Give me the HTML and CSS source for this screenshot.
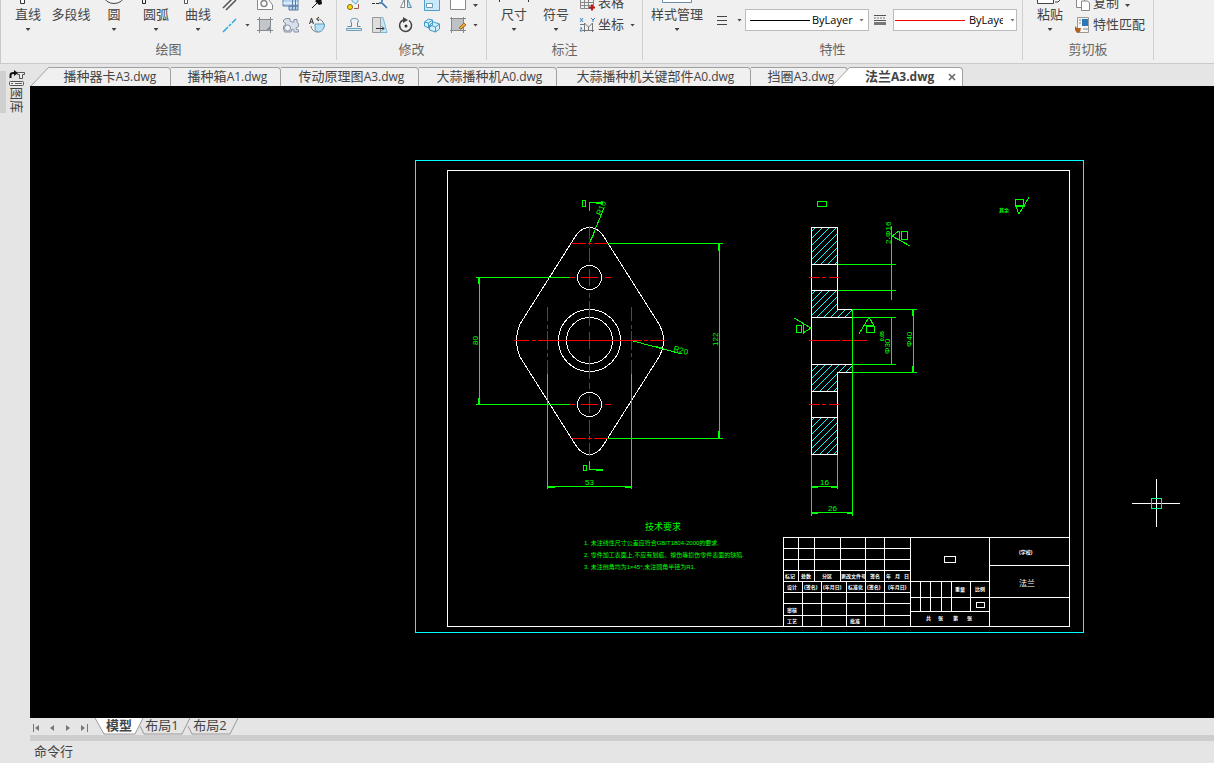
FILE: index.html
```html
<!DOCTYPE html>
<html lang="zh-CN">
<head>
<meta charset="utf-8">
<title>法兰A3.dwg</title>
<link rel="stylesheet" href="styles.css">
</head>
<body>
<header class="ribbon">
  <section class="group group-draw">
    <div class="tools">
      <button class="big w40"><svg class="stub" viewBox="0 0 24 5"><path d="M8.500 0v3.500h-4V0" fill="#fff" stroke="#333"/></svg><span>直线</span><i class="caret"></i></button>
      <button class="big w46"><svg class="stub" viewBox="0 0 24 5"></svg><span>多段线</span></button>
      <button class="big w40"><svg class="stub" viewBox="0 0 24 5"><path d="M2 -4a10 7.500 0 0 0 20 0" fill="#f5f5f5" stroke="#444"/></svg><span>圆</span><i class="caret"></i></button>
      <button class="big w44"><svg class="stub" viewBox="0 0 24 5"><path d="M1.500 0v3.500h-3V0" fill="#fff" stroke="#222"/></svg><span>圆弧</span><i class="caret"></i></button>
      <button class="big w40"><svg class="stub" viewBox="0 0 24 5"><path d="M1.500 0v3.500h-3V0" fill="#fff" stroke="#555"/></svg><span>曲线</span><i class="caret"></i></button>
      <div class="icons">
        <div class="line top">
          <button class="ico" aria-label="构造线"><svg viewBox="0 0 16 11"><path d="M1 8 10-1M4 10 14 0" fill="none" stroke="#555" stroke-width="1.500"/></svg></button><i class="blank"></i>
          <button class="ico" aria-label="面域"><svg viewBox="0 0 16 11"><path d="M.500-2v11.500h15V5l-5-7z" fill="#fff" stroke="#888"/><circle cx="7" cy="3.500" r="3" fill="none" stroke="#888" stroke-width="1.500"/></svg></button>
          <button class="ico" aria-label="表格"><svg viewBox="0 0 16 11"><path d="M0-2h15v8H0zM6 6h9v4H6z" fill="#b4d3f0" stroke="#5b7ba0"/><path d="M0 3h15" stroke="#fff"/><path d="M9.500-2v12M12.500-2v12" stroke="#5b7ba0"/></svg></button>
          <button class="ico" aria-label="射线"><svg viewBox="0 0 16 11"><path d="M3 8 11 0" stroke="#111"/><path d="m6 1 6-4 1 7-3 1z" fill="#111"/></svg></button>
        </div>
        <div class="line">
          <button class="ico" aria-label="中心线"><svg viewBox="0 0 16 16"><path d="m1 15 5-5m1-1 2-2m1-1 4-4" stroke="#29a9df" stroke-width="1.500"/></svg></button><i class="caret"></i>
          <button class="ico" aria-label="填充"><svg viewBox="0 0 16 16"><path d="M2 2h12v12H2z" fill="#c2c6ca"/><path d="M0 2.500h16M0 13.500h16M2.500 0v16M13.500 0v16" stroke="#888"/><path d="m8 14 6-6v6z" fill="#8d9297"/></svg></button>
          <button class="ico" aria-label="块"><svg viewBox="0 0 16 16"><path d="M3 1.500h4V4l2 1h2V2.500h3v3l1.500 1v3L13 11v1l2.500 1v2H11v-2l-2-1-1 3H1.500L.500 12V9L3 7 .500 5V3z" fill="#d9dfe9" stroke="#8492a5"/><circle cx="4.500" cy="11" r="3" fill="#f4f4f4" stroke="#8492a5"/></svg></button>
          <button class="ico" aria-label="轮廓"><svg viewBox="0 0 16 16"><path d="M8 2a6.500 6.500 0 1 1-6 7" fill="none" stroke="#777"/><path d="M6 7h9.500c0 5-3 8-6 8S6 12 6 10z" fill="#b5e0f6" stroke="#5f9bbb"/><path d="M.500 7 2.500 1l2 6M1 5h3M10 0 7.500 2 10 4" fill="none" stroke="#333"/></svg></button>
        </div>
      </div>
    </div>
    <h2>绘图</h2>
  </section>
  <section class="group group-modify">
    <div class="tools">
      <div class="icons">
        <div class="line top">
          <button class="ico" aria-label="复制对象"><svg viewBox="0 0 16 11"><path d="M6-3h6v4L10 4 6 1z" fill="#d5edfb" stroke="#5ca4cf"/><circle cx="4" cy="7" r="2.500" fill="#ffdc00" stroke="#7c6b16"/><path d="M8 8.500h4.500V4" fill="none" stroke="#a55"/></svg></button>
          <button class="ico" aria-label="修剪"><svg viewBox="0 0 16 11"><path d="M0 3.500h3m1 0h3" stroke="#333"/><path d="M7 3h3l5 5M10 2V-1" fill="none" stroke="#2f6fb2" stroke-width="1.500"/></svg></button>
          <button class="ico" aria-label="镜像"><svg viewBox="0 0 16 11"><path d="M6.500-1v8.500h-4z" fill="#fff" stroke="#888"/><path d="M9.500-1v8.500h4z" fill="#bde2f5" stroke="#5b8fad"/></svg></button>
          <button class="ico" aria-label="缩放"><svg viewBox="0 0 16 11"><path d="M.500-1v11.500h15V-1z" fill="#c9e9fa" stroke="#4ba0d0"/><path d="M2.500 3.500h6v4h-6z" fill="#fff" stroke="#6a9ab5"/></svg></button>
          <button class="ico" aria-label="打断"><svg viewBox="0 0 16 11"><path d="M.500-1v10.500h15V-1" fill="#fff" stroke="#888"/></svg></button>
          <i class="caret"></i>
        </div>
        <div class="line">
          <button class="ico" aria-label="偏移"><svg viewBox="0 0 16 16"><path d="M1.500 9.500h4V6c-2-3 0-4.500 3-4.500s5 1.500 3 4.500v3.500h3" fill="none" stroke="#5389ac"/><path d="M.500 11.500h15v2H.500z" fill="#d6eefa" stroke="#6f9db8"/></svg></button>
          <button class="ico" aria-label="拉伸"><svg viewBox="0 0 16 16"><path d="M8 .500h3l4 15H8z" fill="#c3e8f8" stroke="#7ab9d6"/><path d="M.500.500h8v15h-8z" fill="#ddd" stroke="#999"/><path d="M4 11.500h8m-2-2 2 2-2 2" fill="none" stroke="#333"/></svg></button>
          <button class="ico" aria-label="旋转"><svg viewBox="0 0 16 16"><path d="M11 3.500A6 6 0 1 1 5 3" fill="none" stroke="#444" stroke-width="1.500"/><path d="m5 0 5 3-5 3z" fill="#444"/><circle cx="8" cy="9" r="1.500" fill="#333"/></svg></button>
          <button class="ico" aria-label="阵列"><svg viewBox="0 0 16 16"><path d="m.500 5 4-3 4 1v5l-4 3-4-2zM5.500 8l4-3 6 2v5l-4 3-6-2z" fill="#d3effc" stroke="#3f9bc6"/><path d="m.500 5 4 1v5m0-5 4-3M6 8l5.500 2v5m0-5 4-3" fill="none" stroke="#3f9bc6"/></svg></button>
          <button class="ico" aria-label="编辑填充"><svg viewBox="0 0 16 16"><path d="M2 2h12v12H2z" fill="#bfc2c5"/><path d="M0 1.500h16M0 13.500h16M1.500 0v16M13.500 0v16" stroke="#888"/><path d="m9 11 5-5 2 2-5 4z" fill="#edaa2e" stroke="#a16b20"/></svg></button>
          <i class="caret"></i>
        </div>
      </div>
    </div>
    <h2>修改</h2>
  </section>
  <section class="group group-note">
    <div class="tools">
      <button class="big w42"><svg class="stub" viewBox="0 0 24 5"><path d="M-2.500 0v2M26.500 0v2" stroke="#333"/></svg><span>尺寸</span><i class="caret"></i></button>
      <button class="big w42"><svg class="stub" viewBox="0 0 24 5"></svg><span>符号</span><i class="caret"></i></button>
      <div class="icons named">
        <div class="line top"><button class="tool"><svg viewBox="0 0 16 11"><path d="M.500-1v9.500h13V-1M0 2.500h14M0 5.500h14M4.500-1v9M8.500-1v9" fill="none" stroke="#888"/><path d="M9 7.500h6m-3-3v6" stroke="#b71c1c" stroke-width="2"/></svg><span>表格</span></button></div>
        <div class="line"><button class="tool"><svg viewBox="0 0 16 16"><path d="M4.500 15V6M2 13.500h12M4.500 6l4 4 4-4v9M8.500 10v3M0 7.500h4" fill="none" stroke="#777"/><path d="m0 1 3 4m0-4L0 5m11-4 2 2 2-2m-2 2v2M0 11h2l-2 3h2" stroke="#3981be" fill="none"/></svg><span>坐标</span><i class="caret"></i></button></div>
      </div>
    </div>
    <h2>标注</h2>
  </section>
  <section class="group group-props">
    <div class="tools">
      <button class="big w68"><svg class="stub wide" viewBox="0 0 30 5"><path d="M.500 0v2.500h29V0" fill="#fff" stroke="#6b8da8"/></svg><span>样式管理</span><i class="caret"></i></button>
      <button class="pick" aria-label="线宽"><svg viewBox="0 0 10 12"><path d="M0 2.500h10" stroke="#444"/><path d="M0 6.500h10" stroke="#444"/><path d="M0 10.500h10" stroke="#444" stroke-width="1"/></svg><i class="caret"></i></button>
      <label class="combo"><i class="stroke"></i><select aria-label="线型"><option>ByLayer</option></select><i class="caret grey"></i></label>
      <svg class="dash" viewBox="0 0 12 12"><path d="M0 1.500h12M0 6.500h12" stroke="#555"/><path d="M0 4h12" stroke="#777" stroke-dasharray="2 1"/><path d="M0 9.500h12" stroke="#777" stroke-width="3"/></svg>
      <label class="combo red"><i class="stroke"></i><select aria-label="线色"><option>ByLayer</option></select><i class="caret grey"></i></label>
    </div>
    <h2>特性</h2>
  </section>
  <section class="group group-clip">
    <div class="tools">
      <button class="big w46"><svg class="stub wide" viewBox="0 0 30 5"><path d="M2.500 0v3.500h16V0M20 2h3l2-2" fill="#fff" stroke="#444"/></svg><span>粘贴</span><i class="caret"></i></button>
      <div class="icons named">
        <div class="line top"><button class="tool"><svg viewBox="0 0 16 11"><path d="M1.500-1v8.500h8V-1" fill="#fff" stroke="#888"/><path d="M6.500 1v9.500h8V3l-2-2z" fill="#fff" stroke="#888"/></svg><span>复制</span><i class="caret"></i></button></div>
        <div class="line"><button class="tool"><svg viewBox="0 0 16 16"><path d="M2.500.500h11v15h-11z" fill="#f4f4f4" stroke="#999"/><path d="M7 2h6v7H7z" fill="#2e75b6"/><path d="M4 3h2M4 6h2M8 12h5" stroke="#888"/><path d="m0 9 2 2h4l-1 4-3 1-2-3z" fill="#b1601e"/></svg><span>特性匹配</span></button></div>
      </div>
    </div>
    <h2>剪切板</h2>
  </section>
</header>

<div class="workspace">
  <aside class="rail">
    <i class="grip"></i>
    <button class="library">
      <svg viewBox="0 0 16 16"><path d="M1.500 7V4q0-2 3-2H6" fill="none" stroke="#111" stroke-width="2"/><path d="m5-1 4 3-4 3z" fill="#111"/><path d="M8.500 1.500h7v2h-2v4h-3v-4h-2z" fill="#eee" stroke="#555"/><rect x=".500" y="10.500" width="14" height="4" rx="1" fill="#eee" stroke="#555"/><path d="M2 12.500h2m2 0h7" stroke="#666"/></svg>
      <span>图库</span>
    </button>
  </aside>
  <main class="document">
    <nav class="files">
      <svg class="slope" viewBox="0 0 20 19"><path d="M1 19 18.500.500H20V19z" fill="#f0f0f0"/><path d="M1 19 18.500.500H20" fill="none" stroke="#a0a0a0"/></svg>
      <button class="file first">播种器卡<span>A3.dwg</span></button>
      <button class="file f110">播种箱<span>A1.dwg</span></button>
      <button class="file f138">传动原理图<span>A3.dwg</span></button>
      <button class="file f138">大蒜播种机<span>A0.dwg</span></button>
      <button class="file f194">大蒜播种机关键部件<span>A0.dwg</span></button>
      <button class="file f98">挡圈<span>A3.dwg</span></button>
      <svg class="slope over" viewBox="0 0 20 19"><path d="M1 19 18.500.500H20V19z" fill="#fff"/><path d="M1 19 18.500.500H20" fill="none" stroke="#a0a0a0"/></svg>
      <div class="file active"><button class="name">法兰<span>A3.dwg</span></button><button class="close" aria-label="关闭"><svg viewBox="0 0 8 8"><path d="m1 1 6 6m0-6L1 7" stroke="#666" stroke-width="1.500"/></svg></button></div>
    </nav>
    <div class="stage">
      <svg class="drawing" viewBox="30 86 1184 632" preserveAspectRatio="xMinYMin meet" shape-rendering="crispEdges">
        <defs>
          <pattern id="hatch" width="7" height="7" patternUnits="userSpaceOnUse"><path d="M-1 8 8-1" stroke="#0ff" fill="none"/></pattern>
        </defs>
        <rect class="c" x="415.500" y="160.500" width="668" height="472"/>
        <rect class="w" x="447.500" y="170.500" width="622" height="456"/>

        <path class="w" d="M602.800 235.100 658.600 323.400Q663.500 332 663.500 340.500T658.600 357.600L602.800 445.900Q597 454.500 589.500 454.500T576.200 445.900L520.400 357.600Q516.500 349 516.500 340.500T520.400 323.400L576.200 235.100Q582 227.500 589.500 227.500T602.800 235.100Z"/>
        <circle class="w" cx="589.500" cy="277.500" r="12"/>
        <circle class="w" cx="589.500" cy="404.500" r="12"/>
        <circle class="w" cx="589.500" cy="340.500" r="31"/>
        <circle class="w" cx="589.500" cy="340.500" r="23"/>
        <path class="r" d="M589.500 226v13m0 2v4m0 3v14m0 7v17m0 7v5m0 3v25m0 6v17m0 7v23m0 4v6m0 7v17m0 7v14m0 2v4m0 3v13"/>
        <path class="r" d="M514 340.500h15m3 0h4m2 0h104m2 0h4m2 0h15M570 277.500h5m6 0h17m7 0h6M570 404.500h5m6 0h17m7 0h6M572 243.500h14m2 0h4m2 0h14M572 438.500h14m2 0h4m2 0h14"/>
        <path class="r" d="M547.500 307v14m0 4v4m0 2v19m0 3v4m0 3v14M631.500 307v14m0 4v4m0 2v19m0 3v4m0 3v14"/>
        <path class="g" d="M476 277.500h94M476 404.500h94M479.500 277v128M478.500 278v6M478.500 398v6M608 243.500h115M608 438.500h115M719.500 243v195M718.500 244v7M718.500 431v7"/>
        <path class="g" d="M547.500 374v115M631.500 374v115M547 486.500h85M548 487.500h7M625 487.500h7"/>
        <path class="g" d="M582.500 200.500h3v6h-3zM589.500 211v-8.500H603M596 203.500h7M583.500 465.500h3v5h-3zM589.500 461v8.500H603M596 470.500h7"/>
        <path class="g" d="M590 242 604 208M592 238l3-7M633 341l49 13M656 346.500l8 2"/>

        <rect x="811.500" y="227.500" width="26" height="37" fill="url(#hatch)"/>
        <path d="M811.500 290.500h26v19h15v8h-41zM811.500 364.500h41v8h-15v19h-26zM811.500 417.500h26v37h-26z" fill="url(#hatch)"/>
        <path class="w" d="M811.500 227.500h26v82h15M811.500 227v227.500h26v-82h15M811 264.500h27M811 290.500h27M811 317.500h42M811 364.500h42M811 391.500h27M811 417.500h27"/>
        <path class="r" d="M809 277.500h11m2 0h4m3 0h10M809 404.500h11m2 0h4m3 0h10M809 340.500h31m2 0h25"/>
        <path class="g" d="M838 264.500h58M838 290.500h58M891.500 226v74M853 309.500h64M853 372.500h64M913.500 309v64M912.500 310v6M912.500 366v6M853 317.500h43M853 364.500h43M891.500 317v48M852.500 309v207M811.500 455v61M837.500 455v34M811 486.500h27M811 512.500h42M812 487.500h6M831 487.500h6M812 513.500h6M847 513.500h6"/>
        <path class="g" d="M817.500 201.500h9v5h-9zM899 231l-7 5 18 10M899.500 231v10M901.500 231.500h6v8h-6zM794 318l17 10-8 5M803.500 323v11M796.500 325.500h5v7h-5zM859 334l10-17 5 9M865 325.500h9M866.500 326.500h8v6h-8z"/>
        <path class="g" d="M1015.500 199.500h8v6h-8zM1015 206.500h10M1016 207l3 7 10-17"/>

        <g class="dim">
          <text x="585" y="485">53</text>
          <text x="820" y="485">16</text>
          <text x="828" y="511">26</text>
          <text transform="translate(478 345) rotate(-90)">80</text>
          <text transform="translate(718 346) rotate(-90)">122</text>
          <text transform="translate(601 216) rotate(-68)">R10</text>
          <text transform="translate(673 351) rotate(15)">R20</text>
          <text transform="translate(891 244) rotate(-90)">2-Φ16</text>
          <text transform="translate(890 354) rotate(-90)">Φ30</text>
          <text class="tol" transform="translate(884 341) rotate(-90)">0.05</text>
          <text transform="translate(912 347) rotate(-90)">Φ40</text>
        </g>
        <g class="note">
          <text class="head" x="645" y="530">技术要求</text>
          <text x="584" y="545">1. 未注线性尺寸公差应符合GB/T1804-2000的要求.</text>
          <text x="584" y="557">2. 零件加工表面上,不应有划痕、擦伤等损伤零件表面的缺陷.</text>
          <text x="584" y="569">3. 未注倒角均为1×45°,未注圆角半径为R1.</text>
        </g>
        <text class="rest" x="999" y="212">其余</text>

        <path class="w" d="M783.500 626.500v-89h286M783 548.500h127M783 559.500h127M783 570.500h127M783 581.500h206M783 592.500h127M783 603.500h127M783 615.500h127M798.500 537v44M814.500 537v44M840.500 537v44M865.500 537v89M884.500 537v89M910.500 537v89M802.500 581v45M821.500 581v45M846.500 581v45M910 597.500h79M910 611.500h79M920.500 581v30M930.500 581v30M941.500 581v30M951.500 581v30M970.500 581v30M989.500 537v89M989 565.500h80M989 597.500h80M944.500 556.500h11v6h-11zM976.500 602.500h8v5h-8z"/>
        <g class="cell">
          <text x="785" y="578">标记</text><text x="801" y="578">处数</text><text x="822" y="578">分区</text><text x="841" y="578">更改文件号</text><text x="870" y="578">签名</text><text x="886" y="578">年</text><text x="895" y="578">月</text><text x="904" y="578">日</text>
          <text x="787" y="589">设计</text><text x="804" y="589">(签名)</text><text x="823" y="589">(年月日)</text><text x="848" y="589">标准化</text><text x="867" y="589">(签名)</text><text x="888" y="589">(年月日)</text>
          <text x="787" y="612">审核</text><text x="787" y="623">工艺</text><text x="850" y="623">批准</text>
          <text x="955" y="591">重量</text><text x="975" y="591">比例</text>
          <text x="926" y="620">共</text><text x="938" y="620">张</text><text x="953" y="620">第</text><text x="967" y="620">张</text>
          <text class="school" x="1019" y="554">(学校)</text><text class="part" x="1019" y="586">法兰</text>
        </g>

        <path class="w" d="M1132 503.500h48M1156.500 479v48"/>
        <rect x="1151.500" y="498.500" width="10" height="10" fill="none" stroke="#00ff80"/>
      </svg>
    </div>
    <nav class="sheets">
      <button class="step" aria-label="第一页"><svg viewBox="0 0 8 8"><path d="M1.500 0v8" stroke="#777"/><path d="M7 1v6L3 4z" fill="#777"/></svg></button>
      <button class="step" aria-label="上一页"><svg viewBox="0 0 8 8"><path d="M6 1v6L2 4z" fill="#777"/></svg></button>
      <button class="step" aria-label="下一页"><svg viewBox="0 0 8 8"><path d="M2 1v6l4-3z" fill="#777"/></svg></button>
      <button class="step" aria-label="最后一页"><svg viewBox="0 0 8 8"><path d="M7.500 0v8" stroke="#777"/><path d="M1 1v6l4-3z" fill="#777"/></svg></button>
      <button class="sheet current"><svg viewBox="0 0 50 17" preserveAspectRatio="none"><path d="m1 0 9 16h31l8-16z" fill="#fff"/><path d="m1 0 9 16h31l8-16" fill="none" stroke="#999"/></svg><span>模型</span></button>
      <button class="sheet"><svg viewBox="0 0 50 17" preserveAspectRatio="none"><path d="m0 8 4 8h38l8-16" fill="none" stroke="#999"/></svg><span>布局1</span></button>
      <button class="sheet"><svg viewBox="0 0 50 17" preserveAspectRatio="none"><path d="m0 8 4 8h38l8-16" fill="none" stroke="#999"/></svg><span>布局2</span></button>
    </nav>
    <footer class="command">命令行</footer>
  </main>
</div>
</body>
</html>
```
FILE: styles.css
```css
* { box-sizing: border-box; }
body {
  margin: 0;
  min-height: 100vh;
  display: flex;
  flex-direction: column;
  background: #e5e5e5;
  color: #444;
  font: 13px/16px "Open Sans", "Noto Sans CJK SC", sans-serif;
  overflow: hidden;
}
button {
  margin: 0;
  padding: 0;
  border: 0;
  background: none;
  color: inherit;
  font: inherit;
  white-space: nowrap;
}
svg { display: block; overflow: visible; }

.ribbon {
  display: flex;
  height: 64px;
  overflow: hidden;
  background: #f0f0f0;
  border-left: 1px solid #c8c8c8;
  border-bottom: 1px solid #cacaca;
}
.group {
  display: flex;
  flex-direction: column;
  height: 60px;
  border-right: 1px solid #d0d0d0;
}
.group h2 {
  margin: 3px 0 0;
  font-size: 13px;
  font-weight: 400;
  line-height: 16px;
  text-align: center;
  color: #666;
}
.tools { display: flex; height: 38px; }
.group-draw { width: 336px; }
.group-draw .tools { padding-left: 7px; }
.group-modify { width: 150px; }
.group-modify .tools { padding-left: 9px; }
.group-note { width: 156px; }
.group-note .tools { padding-left: 6px; }
.group-props { width: 380px; }
.group-clip { width: 131px; }
.group-clip .tools { padding-left: 4px; }

.big {
  display: flex;
  flex-direction: column;
  align-items: center;
  flex: none;
}
.big span { margin-top: 1px; }
.stub { width: 24px; height: 5px; }
.stub.wide { width: 30px; }
.big .caret { margin-top: 6px; }
.w40 { width: 40px; }
.w42 { width: 42px; }
.w44 { width: 44px; }
.w46 { width: 46px; }
.w68 { width: 68px; }

.caret {
  flex: none;
  width: 5px;
  height: 3px;
  background: #444;
  clip-path: polygon(0 0, 100% 0, 50% 100%);
}
.caret.grey { background: #777; }
.blank { width: 5px; }

.icons { display: flex; flex-direction: column; gap: 6px; }
.line { display: flex; align-items: center; gap: 10px; height: 16px; }
.line.top { height: 11px; }
.group-draw .icons { padding-left: 4px; }
.ico svg, .tool svg { width: 16px; height: 16px; }
.top .ico svg, .top .tool svg { height: 11px; }
.group-draw .line .caret, .blank { margin: 0 -3px; }
.group-modify .line > .caret { margin-left: -3px; }
.tool { display: flex; align-items: center; gap: 2px; }
.tool .caret { margin-left: 4px; }
.tool span { margin-top: -2px; }
.top .tool span { margin-top: -7px; }
.group-note .icons { padding-left: 3px; }
.group-clip .icons { padding-left: 2px; }

.pick { display: flex; align-items: center; gap: 10px; height: 40px; margin-left: 6px; }
.pick svg { width: 10px; height: 12px; }
.combo {
  display: flex;
  align-items: center;
  width: 124px;
  height: 22px;
  margin: 9px 0 0 3px;
  padding: 0 4px;
  background: #fff;
  border: 1px solid #bbb;
}
.stroke { flex: none; width: 60px; height: 1px; background: #000; }
.combo select {
  flex: 1;
  min-width: 0;
  margin-left: 2px;
  padding: 0;
  appearance: none;
  border: 0;
  background: none;
  color: #000;
  font: 11px/18px "Open Sans", sans-serif;
}
.combo.red { margin-left: 7px; padding-left: 1px; }
.combo.red .stroke { width: 70px; background: #f00; }
.combo.red select { flex: 0 0 34px; margin: 0 7px 0 4px; }
.dash { width: 12px; height: 12px; margin: 14px 0 0 5px; }

.workspace { display: flex; flex: 1; }
.rail { display: flex; gap: 3px; width: 30px; padding-top: 7px; align-items: flex-start; }
.grip { width: 6px; height: 42px; background: #cfcfcf; }
.library { display: flex; flex-direction: column; align-items: center; }
.library svg { width: 16px; height: 16px; }
.library span { writing-mode: vertical-rl; text-orientation: sideways; }

.document { display: flex; flex-direction: column; flex: 1; min-width: 0; }
.files { display: flex; align-items: flex-end; height: 22px; }
.slope { flex: none; width: 20px; height: 19px; }
.slope.over { margin-left: -17px; }
.file {
  flex: none;
  height: 19px;
  padding-bottom: 2px;
  background: #f0f0f0;
  border: solid #a0a0a0;
  border-width: 1px 1px 0 0;
  border-radius: 0 4px 0 0;
  line-height: 16px;
}
.file span { font-size: 12px; }
.first { width: 121px; }
.f98 { width: 97px; padding-left: 4px; }
.f110 { width: 110px; padding-left: 4px; }
.f138 { width: 138px; padding-left: 4px; }
.f194 { width: 194px; padding-left: 4px; }
.active {
  display: flex;
  align-items: center;
  justify-content: space-between;
  width: 112px;
  padding: 0 6px 2px 14px;
  background: #fff;
  font-weight: 700;
}
.close svg { width: 8px; height: 8px; margin-top: 2px; }

.stage { flex: 1; background: #000; overflow: hidden; }
.drawing { width: 100%; }
.drawing .w, .drawing .c, .drawing .r, .drawing .g { fill: none; stroke-width: 1; }
.drawing .w { stroke: #fff; }
.drawing .c { stroke: #0ff; }
.drawing .r { stroke: #f00; }
.drawing .g { stroke: #0f0; }
.dim { fill: #0f0; font: 8px "Liberation Sans", sans-serif; }
.dim .tol { font-size: 5px; font-weight: 700; }
.note { fill: #0f0; font: 6px "Liberation Sans", "Noto Sans CJK SC", sans-serif; }
.note .head { font-size: 9px; }
.rest { fill: #0f0; font: 700 5px "Noto Sans CJK SC", sans-serif; }
.cell { fill: #fff; font: 700 5px "Liberation Sans", "Noto Sans CJK SC", sans-serif; }
.cell .part { font-size: 8px; font-weight: 400; }

.sheets { display: flex; height: 17px; }
.step { display: flex; align-items: center; width: 16px; padding-left: 2px; }
.step svg { width: 8px; height: 8px; margin-top: 2px; }
.sheet { display: grid; width: 48px; height: 17px; }
.sheet svg, .sheet span { grid-area: 1 / 1; }
.sheet svg { width: 50px; height: 17px; }
.sheet span { z-index: 1; padding-right: 6px; line-height: 14px; text-align: center; }
.sheet.current { width: 46px; font-weight: 700; }
.sheet.current span { padding-right: 0; }
.command {
  height: 28px;
  padding: 1px 4px 0;
  border-top: 6px solid #cdcdcd;
  line-height: 18px;
}
```
